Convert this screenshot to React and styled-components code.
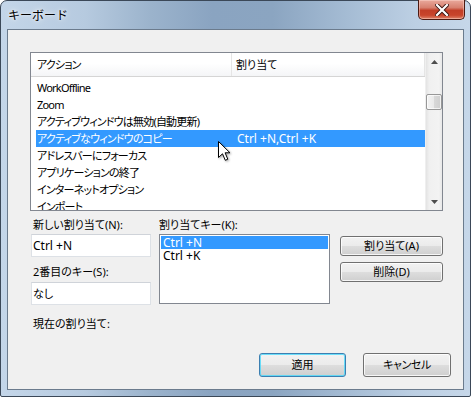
import React from "react";
import styled, { createGlobalStyle } from "styled-components";

const Global = createGlobalStyle`
  html, body { margin: 0; padding: 0; background: #ffffff; }
  body { font-family: "Noto Sans", "Noto Sans CJK JP", sans-serif; font-size: 11px; color: #000; }
  * { box-sizing: border-box; }
`;

const Window = styled.div`
  width: 471px;
  height: 397px;
  border: 1px solid #3b4858;
  border-radius: 7px 7px 2px 2px;
  padding: 0 6px 6px 6px;
  display: flex;
  flex-direction: column;
  background: linear-gradient(90deg, #c4d6e9 0%, #b6cadf 18%, #9bb3cc 32%, #8aa4c1 45%, #8ba5c1 58%, #a5bcd4 74%, #bccfe3 88%, #c6d7e9 100%);
  font-feature-settings: "palt";
`;

const TitleBar = styled.div`
  height: 28px;
  display: flex;
  justify-content: space-between;
  align-items: flex-start;
  padding-left: 1px;
`;

const Title = styled.div`
  margin-top: 7px;
  font-size: 12px;
  line-height: 16px;
  font-feature-settings: normal;
  color: #000;
  text-shadow: 0 0 6px rgba(255,255,255,0.9), 0 0 3px rgba(255,255,255,0.8);
`;

const CloseButton = styled.div`
  width: 47px;
  height: 20px;
  margin-top: -1px;
  margin-right: -1px;
  border: 1px solid #4c1a12;
  border-top: none;
  border-radius: 0 0 5px 5px;
  background: linear-gradient(180deg, #e9a99c 0%, #d7806f 40%, #c23e27 55%, #c8442b 80%, #de8369 100%);
  box-shadow: inset 0 0 0 1px rgba(255,220,210,0.45);
  display: flex;
  align-items: center;
  justify-content: center;
`;

const Client = styled.div`
  flex: 1;
  position: relative;
  border: 1px solid #6b7b8d;
  background: #f0f0f0;
  display: flex;
  flex-direction: column;
`;

const ListView = styled.div`
  margin: 22px 0 0 22px;
  width: 413px;
  height: 159px;
  border: 1px solid #828790;
  background: #fff;
  display: flex;
  overflow: hidden;
`;

const ListMain = styled.div`
  flex: 1;
  display: flex;
  flex-direction: column;
  overflow: hidden;
`;

const Header = styled.div`
  height: 24px;
  display: flex;
  background: linear-gradient(180deg, #ffffff 0%, #ffffff 45%, #f4f5f7 100%);
  border-bottom: 1px solid #d5d5d5;
`;

const HeaderCell = styled.div`
  width: ${(p) => p.$w}px;
  flex: ${(p) => (p.$grow ? 1 : "none")};
  padding-left: ${(p) => p.$pad}px;
  letter-spacing: ${(p) => (p.$kana ? "-0.8px" : "0")};
  line-height: 23px;
  border-right: 1px solid #e5e5e5;
  white-space: nowrap;
`;

const Rows = styled.div`
  padding: 2px 0 0 5px;
  display: flex;
  flex-direction: column;
`;

const Row = styled.div`
  height: 17px;
  display: flex;
  line-height: 17px;
  white-space: nowrap;
  background: ${(p) => (p.$sel ? "#3399ff" : "transparent")};
  color: ${(p) => (p.$sel ? "#fff" : "#000")};
`;

const ActionCell = styled.div`
  width: 196px;
  padding-left: 1px;
  letter-spacing: -0.8px;
  overflow: hidden;
`;

const KeyCell = styled.div`
  flex: 1;
  padding-left: 5px;
  font-size: 12px;
  overflow: hidden;
`;

const ScrollBar = styled.div`
  width: 17px;
  display: flex;
  flex-direction: column;
  background: linear-gradient(90deg, #e3e3e3 0%, #f0f0f0 20%, #f3f3f3 80%, #e8e8e8 100%);
  border-left: 1px solid #efefef;
`;

const ScrollArrow = styled.div`
  height: 17px;
  display: flex;
  align-items: center;
  justify-content: center;
`;

const Track = styled.div`
  flex: 1;
  padding-top: 24px;
  display: flex;
  justify-content: center;
`;

const Thumb = styled.div`
  width: 16px;
  height: 16px;
  border: 1px solid #979797;
  border-radius: 2px;
  background: linear-gradient(90deg, #f3f3f3 0%, #e9e9e9 50%, #d8d8d8 51%, #cfcfcf 100%);
  box-shadow: inset 0 0 0 1px rgba(255,255,255,0.7);
`;

const Lower = styled.div`
  display: flex;
  padding-left: 23px;
  margin-top: 7px;
`;

const Column = styled.div`
  width: ${(p) => p.$w}px;
  margin-right: ${(p) => p.$mr || 0}px;
  display: flex;
  flex-direction: column;
`;

const Label = styled.div`
  height: 14px;
  line-height: 14px;
  padding-left: ${(p) => p.$pad || 0}px;
  margin-top: ${(p) => p.$mt || 0}px;
  white-space: nowrap;
`;

const Input = styled.div`
  margin-top: ${(p) => p.$mt || 2}px;
  height: ${(p) => p.$h}px;
  border: 1px solid #dde1e6;
  border-top-color: #cfd3d9;
  background: #fff;
  padding-left: 1px;
  font-size: ${(p) => (p.$latin ? 12 : 11)}px;
  line-height: ${(p) => p.$h - 2}px;
  white-space: nowrap;
`;

const KeyList = styled.div`
  margin-top: 2px;
  height: 70px;
  border: 1px solid #828790;
  background: #fff;
  padding: 1px;
`;

const KeyItem = styled.div`
  height: 13px;
  line-height: 13px;
  padding-left: 2px;
  font-size: 12px;
  background: ${(p) => (p.$sel ? "#3399ff" : "transparent")};
  color: ${(p) => (p.$sel ? "#fff" : "#000")};
`;

const Button = styled.div`
  width: ${(p) => p.$w}px;
  height: ${(p) => p.$h}px;
  margin-top: ${(p) => p.$mt || 0}px;
  border: 1px solid ${(p) => (p.$default ? "#3c7fb1" : "#707070")};
  border-radius: 3px;
  background: linear-gradient(180deg, #f2f2f2 0%, #ebebeb 48%, #dddddd 52%, #cfcfcf 100%);
  box-shadow: inset 0 0 0 1px ${(p) => (p.$default ? "rgba(72,216,251,0.8)" : "rgba(255,255,255,0.8)")};
  display: flex;
  align-items: center;
  justify-content: center;
  letter-spacing: ${(p) => (p.$kana ? "-0.4px" : "0")};
  line-height: 14px;
  white-space: nowrap;
`;

const Spacer = styled.div`
  flex: 1;
`;

const Footer = styled.div`
  display: flex;
  justify-content: flex-end;
  gap: 17px;
  padding: 0 12px 12px 0;
`;

const Cursor = styled.svg`
  position: absolute;
  left: 210px;
  top: 111px;
  filter: drop-shadow(1px 1px 1px rgba(0,0,0,0.35));
`;

const rows = [
  ["WorkOffline", ""],
  ["Zoom", ""],
  ["アクティブウィンドウは無効(自動更新)", ""],
  ["アクティブなウィンドウのコピー", "Ctrl +N,Ctrl +K", true],
  ["アドレスバーにフォーカス", ""],
  ["アプリケーションの終了", ""],
  ["インターネットオプション", ""],
  ["インポート", ""],
];

export default function App() {
  return (
    <>
      <Global />
      <Window>
        <TitleBar>
          <Title>キーボード</Title>
          <CloseButton>
            <svg width="14" height="12" viewBox="0 0 14 12">
              <path d="M2 1 L12 11 M12 1 L2 11" stroke="#3a1410" strokeWidth="4" strokeLinecap="square" />
              <path d="M2 1 L12 11 M12 1 L2 11" stroke="#ffffff" strokeWidth="2.2" strokeLinecap="square" />
            </svg>
          </CloseButton>
        </TitleBar>
        <Client>
          <ListView>
            <ListMain>
              <Header>
                <HeaderCell $w={201} $pad={6} $kana>アクション</HeaderCell>
                <HeaderCell $grow $pad={4}>割り当て</HeaderCell>
              </Header>
              <Rows>
                {rows.map(([a, b, sel], i) => (
                  <Row key={i} $sel={sel}>
                    <ActionCell>{a}</ActionCell>
                    <KeyCell>{b}</KeyCell>
                  </Row>
                ))}
              </Rows>
            </ListMain>
            <ScrollBar>
              <ScrollArrow>
                <svg width="7" height="4" viewBox="0 0 7 4"><path d="M0 4 L3.5 0 L7 4 Z" fill="#4d4d4d" /></svg>
              </ScrollArrow>
              <Track><Thumb /></Track>
              <ScrollArrow>
                <svg width="7" height="4" viewBox="0 0 7 4"><path d="M0 0 L3.5 4 L7 0 Z" fill="#4d4d4d" /></svg>
              </ScrollArrow>
            </ScrollBar>
          </ListView>
          <Lower>
            <Column $w={120} $mr={8}>
              <Label $pad={2}>新しい割り当て(N):</Label>
              <Input $h={23} $latin>Ctrl +N</Input>
              <Label $pad={2} $mt={8}>2番目のキー(S):</Label>
              <Input $h={23} $mt={3}>なし</Input>
              <Label $pad={2} $mt={12}>現在の割り当て:</Label>
            </Column>
            <Column $w={171} $mr={10}>
              <Label>割り当てキー(K):</Label>
              <KeyList>
                <KeyItem $sel>Ctrl +N</KeyItem>
                <KeyItem>Ctrl +K</KeyItem>
              </KeyList>
            </Column>
            <Column $w={103}>
              <Button $w={103} $h={20} $mt={18}>割り当て(A)</Button>
              <Button $w={103} $h={20} $mt={6}>削除(D)</Button>
            </Column>
          </Lower>
          <Spacer />
          <Footer>
            <Button $w={87} $h={24} $default>適用</Button>
            <Button $w={88} $h={24} $kana>キャンセル</Button>
          </Footer>
          <Cursor width="14" height="21" viewBox="0 0 14 21">
            <path d="M0.5 0.5 L0.5 16.5 L4.5 12.8 L7.3 19.3 L9.8 18.2 L7.1 11.8 L12 11.8 Z" fill="#fff" stroke="#000" strokeWidth="1" strokeLinejoin="miter" />
          </Cursor>
        </Client>
      </Window>
    </>
  );
}
